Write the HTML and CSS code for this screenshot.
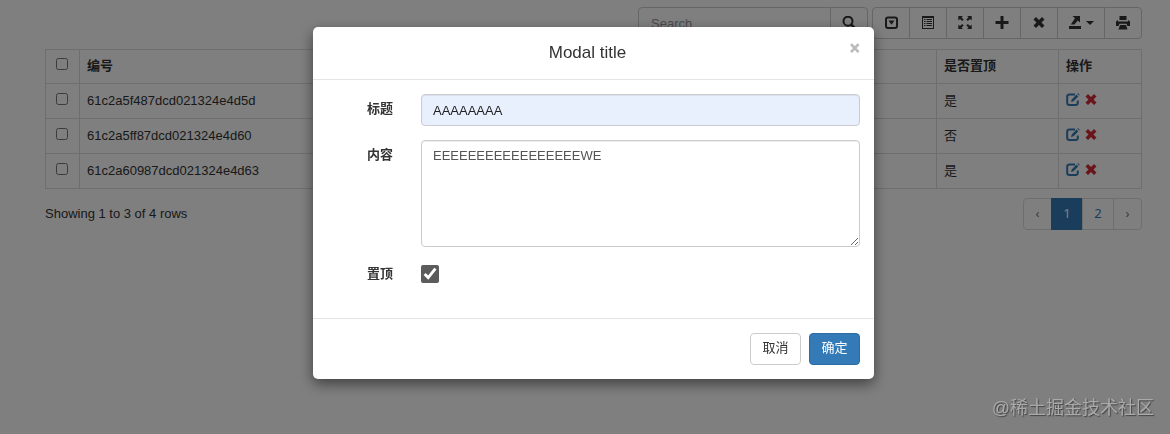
FILE: index.html
```html
<!DOCTYPE html>
<html lang="zh-CN">

<head>
    <meta charset="UTF-8" />
    <meta name="viewport" content="width=device-width, initial-scale=1.0" />
    <title>Modal title</title>
    <link rel="stylesheet" href="styles.css">
</head>

<body>

    <!-- icon set -->
    <svg class="sprite" aria-hidden="true">
        <symbol id="i-search" viewBox="0 0 14 14">
            <circle cx="6" cy="5.2" r="4.5" fill="none" stroke="currentColor" stroke-width="2"/>
            <path d="M9.300 8.700l3.200 3.200" stroke="currentColor" stroke-width="2.6" stroke-linecap="round"/>
        </symbol>
        <symbol id="i-collapse" viewBox="0 0 14 14">
            <rect x="2" y="1.5" width="11" height="10.5" rx="2" fill="none" stroke="currentColor" stroke-width="2"/>
            <path d="M4.500 4.500h6L7.500 8.700z"/>
        </symbol>
        <symbol id="i-list" viewBox="0 0 14 14">
            <path fill-rule="evenodd" d="M1 0h12v13H1zM2 2v10h10V2z"/>
            <path d="M3 3h1.500v1H3zM5.500 3H11v1H5.500zM3 5h1.500v1H3zM5.500 5H11v1H5.500zM3 7h1.500v1H3zM5.500 7H11v1H5.500zM3 9h1.500v1H3zM5.500 9H11v1H5.500z"/>
        </symbol>
        <symbol id="i-full" viewBox="0 0 14 14">
            <path d="M.3 0h4.6L3.500 1.400l2.200 2.200-1.500 1.500L2 2.900.3 4.500zM13.700 0H9.100l1.400 1.400-2.200 2.200 1.500 1.500L12 2.900l1.700 1.600zM.3 13h4.600l-1.400-1.400 2.200-2.200-1.500-1.500L2 10.100.3 8.500zM13.700 13H9.100l1.400-1.400-2.200-2.200 1.500-1.500 2.200 2.200 1.700-1.600z"/>
        </symbol>
        <symbol id="i-plus" viewBox="0 0 14 14">
            <path d="M5.500 0h3v5h5v3h-5v5h-3V8h-5V5h5z"/>
        </symbol>
        <symbol id="i-remove" viewBox="0 0 14 14">
            <path d="M4 1l3 3 3-3 2.500 2.500-3 3 3 3L10 12 7 9l-3 3-2.500-2.500 3-3-3-3z"/>
        </symbol>
        <symbol id="i-export" viewBox="0 0 14 14">
            <path d="M4.500 0H12v6.500L9.800 4.500 6.500 8.500H2.800L7 2.200zM1 10h12v3H1z"/>
        </symbol>
        <symbol id="i-print" viewBox="0 0 14 14">
            <path d="M3.500 0h7v4h-7zM0 5.500L2 4v1.500h10V4l2 1.500V10h-2.600L10.500 7.800h-7L2.600 10H0zM4 9h6l1.500 4.500h-9z"/>
        </symbol>
        <symbol id="i-edit" viewBox="0 0 14 14">
            <path d="M9 1.500H3.500Q1.200 1.500 1.200 3.800v6q0 2.300 2.300 2.300h6q2.300 0 2.300-2.300V7.500" fill="none" stroke="currentColor" stroke-width="2"/>
            <path d="M5 9l.7-2.600 4.800-4.800 1.800 1.800L7.500 8.300zM11.300.8l.7-.7 1.800 1.800-.7.700z"/>
        </symbol>
    </svg>

    <div class="page">
        <div class="toolbar">
            <div class="search">
                <input type="text" placeholder="Search" aria-label="Search">
                <button type="button" aria-label="Search"><svg class="icon"><use href="#i-search"/></svg></button>
            </div>
            <div class="tools">
                <button type="button" aria-label="Pagination"><svg class="icon"><use href="#i-collapse"/></svg></button>
                <button type="button" aria-label="Toggle"><svg class="icon"><use href="#i-list"/></svg></button>
                <button type="button" aria-label="Fullscreen"><svg class="icon"><use href="#i-full"/></svg></button>
                <button type="button" aria-label="Add"><svg class="icon"><use href="#i-plus"/></svg></button>
                <button type="button" aria-label="Delete"><svg class="icon"><use href="#i-remove"/></svg></button>
                <button type="button" aria-label="Export"><svg class="icon"><use href="#i-export"/></svg><span class="caret"></span></button>
                <button type="button" aria-label="Print"><svg class="icon"><use href="#i-print"/></svg></button>
            </div>
        </div>

        <table>
            <thead>
                <tr>
                    <th class="col-check"><input type="checkbox" aria-label="All"></th>
                    <th>编号</th>
                    <th class="col-top">是否置顶</th>
                    <th class="col-action">操作</th>
                </tr>
            </thead>
            <tbody>
                <tr>
                    <td class="col-check"><input type="checkbox" aria-label="Row 1"></td>
                    <td>61c2a5f487dcd021324e4d5d</td>
                    <td>是</td>
                    <td><a class="edit" href="#" aria-label="Edit"><svg class="icon"><use href="#i-edit"/></svg></a> <a class="remove" href="#" aria-label="Remove"><svg class="icon"><use href="#i-remove"/></svg></a></td>
                </tr>
                <tr>
                    <td class="col-check"><input type="checkbox" aria-label="Row 2"></td>
                    <td>61c2a5ff87dcd021324e4d60</td>
                    <td>否</td>
                    <td><a class="edit" href="#" aria-label="Edit"><svg class="icon"><use href="#i-edit"/></svg></a> <a class="remove" href="#" aria-label="Remove"><svg class="icon"><use href="#i-remove"/></svg></a></td>
                </tr>
                <tr>
                    <td class="col-check"><input type="checkbox" aria-label="Row 3"></td>
                    <td>61c2a60987dcd021324e4d63</td>
                    <td>是</td>
                    <td><a class="edit" href="#" aria-label="Edit"><svg class="icon"><use href="#i-edit"/></svg></a> <a class="remove" href="#" aria-label="Remove"><svg class="icon"><use href="#i-remove"/></svg></a></td>
                </tr>
            </tbody>
        </table>

        <div class="table-footer">
            <span>Showing 1 to 3 of 4 rows</span>
            <nav class="pagination">
                <a class="arrow" href="#">‹</a>
                <a class="active" href="#">1</a>
                <a href="#">2</a>
                <a class="arrow" href="#">›</a>
            </nav>
        </div>
    </div>

    <div class="backdrop">
        <form class="modal" role="dialog" aria-labelledby="modalTitle">
            <div class="modal-header">
                <h4 id="modalTitle">Modal title</h4>
                <button type="button" class="close" aria-label="Close">×</button>
            </div>
            <div class="modal-body">
                <div class="field">
                    <label for="title">标题</label>
                    <input type="text" id="title" class="control filled" value="AAAAAAAA">
                </div>
                <div class="field">
                    <label for="content">内容</label>
                    <textarea id="content" class="control">EEEEEEEEEEEEEEEEEWE</textarea>
                </div>
                <div class="field field-check">
                    <label for="top">置顶</label>
                    <input type="checkbox" id="top" checked>
                </div>
            </div>
            <div class="modal-footer">
                <button type="button" class="btn">取消</button>
                <button type="button" class="btn btn-primary">确定</button>
            </div>
        </form>
    </div>

    <div class="watermark">@稀土掘金技术社区</div>

</body>

</html>
```
FILE: styles.css
```css
* {
    box-sizing: border-box;
}

body {
    margin: 0;
    font-family: "Liberation Sans", "Noto Sans CJK SC", sans-serif;
    font-size: 13px;
    line-height: 18px;
    color: #333;
    background-color: #fff;
}

button,
input,
textarea {
    font: inherit;
    color: inherit;
}

button {
    cursor: pointer;
}

a {
    color: #337ab7;
    text-decoration: none;
}

.sprite {
    position: absolute;
    width: 0;
    height: 0;
}

.icon {
    width: 14px;
    height: 14px;
    fill: currentColor;
    flex: none;
}

.page {
    padding: 7px 28px 0 45px;
}

/* toolbar */
.toolbar {
    display: flex;
    justify-content: flex-end;
    gap: 4px;
    margin-bottom: 10px;
}

.search,
.tools {
    display: flex;
    height: 32px;
}

.search input {
    width: 193px;
    padding: 2px 12px 0;
    border: 1px solid #ccc;
    border-radius: 4px 0 0 4px;
}

.search input::placeholder {
    color: #999;
}

.toolbar button {
    display: flex;
    align-items: center;
    justify-content: center;
    gap: 4px;
    padding: 0 10px;
    margin-left: -1px;
    min-width: 38px;
    border: 1px solid #ccc;
    background-color: #fff;
}

.tools button:first-child {
    margin-left: 0;
    border-radius: 4px 0 0 4px;
}

.toolbar button:last-child {
    border-radius: 0 4px 4px 0;
}

.caret {
    border-top: 4px solid;
    border-left: 4px solid transparent;
    border-right: 4px solid transparent;
}

/* table */
table {
    width: 100%;
    table-layout: fixed;
    border-collapse: collapse;
}

th,
td {
    height: 35px;
    padding: 0 7px;
    border: 1px solid #ddd;
    text-align: left;
}

th {
    height: 34px;
    padding-bottom: 2px;
}

.col-check {
    width: 34px;
}

.col-check input {
    display: block;
    width: 12px;
    height: 12px;
    margin: 0 0 4px 3px;
}

.col-top {
    width: 122px;
}

.col-action {
    width: 83px;
}

td .icon {
    vertical-align: -2px;
}

td .remove {
    color: #d02c38;
}

.table-footer {
    display: flex;
    justify-content: space-between;
    align-items: center;
    margin-top: 9px;
}

.pagination {
    display: flex;
    font-family: "Noto Sans", sans-serif;
}

.pagination a {
    min-width: 32px;
    padding: 5px 11px 7px;
    margin-left: -1px;
    border: 1px solid #ddd;
    text-align: center;
}

.pagination .arrow {
    min-width: 29px;
    color: #777;
}

.pagination a:first-child {
    border-radius: 4px 0 0 4px;
}

.pagination a:last-child {
    border-radius: 0 4px 4px 0;
}

.pagination .active {
    color: #fff;
    background-color: #337ab7;
    border-color: #337ab7;
}

/* modal */
.backdrop {
    position: fixed;
    inset: 0;
    padding: 27px 28px 0 45px;
    background-color: rgba(0, 0, 0, 0.5);
}

.modal {
    max-width: 561px;
    margin: 0 auto;
    background-color: #fff;
    border-radius: 5px;
    box-shadow: 0 5px 14px rgba(0, 0, 0, 0.5);
}

.modal-header {
    position: relative;
    padding: 14px 26px 14px 14px;
    border-bottom: 1px solid #e5e5e5;
}

.modal-header h4 {
    margin: 0;
    font-size: 17px;
    font-weight: normal;
    line-height: 24px;
    text-align: center;
}

.close {
    position: absolute;
    top: 11px;
    right: 14px;
    padding: 0;
    border: 0;
    background: none;
    color: #bbb;
    font-family: Roboto, sans-serif;
    font-size: 20px;
    font-weight: 900;
    line-height: 20px;
}

.modal-body {
    padding: 14px 14px 35px;
}

.field {
    display: grid;
    grid-template-columns: 66px 1fr;
    column-gap: 28px;
    margin-bottom: 14px;
}

.field label {
    padding-top: 6px;
    font-weight: bold;
    text-align: right;
}

.control {
    display: block;
    width: 100%;
    height: 32px;
    padding: 6px 11px;
    border: 1px solid #ccc;
    border-radius: 4px;
    background-color: #fff;
    color: #555;
    box-shadow: inset 0 1px 1px rgba(0, 0, 0, 0.07);
}

.control.filled {
    background-color: #e8f0fe;
    color: #222;
}

textarea.control {
    height: 107px;
}

.field-check {
    margin: 0;
    padding-top: 4px;
}

.field-check label {
    padding-top: 0;
}

.field-check input {
    width: 18px;
    height: 18px;
    margin: 0;
    accent-color: #5c5c5c;
}

.modal-footer {
    display: flex;
    justify-content: flex-end;
    gap: 8px;
    padding: 14px;
    border-top: 1px solid #e5e5e5;
}

.btn {
    min-width: 51px;
    height: 32px;
    padding: 0 11px 2px;
    border: 1px solid #ccc;
    border-radius: 4px;
    background-color: #fff;
}

.btn-primary {
    border-color: #2e6da4;
    background-color: #337ab7;
    color: #fff;
}

.watermark {
    position: fixed;
    right: 16px;
    bottom: 14px;
    color: #aaa;
    font-size: 18px;
    line-height: 24px;
    text-shadow: 1px 1px 1px #444;
}
```
